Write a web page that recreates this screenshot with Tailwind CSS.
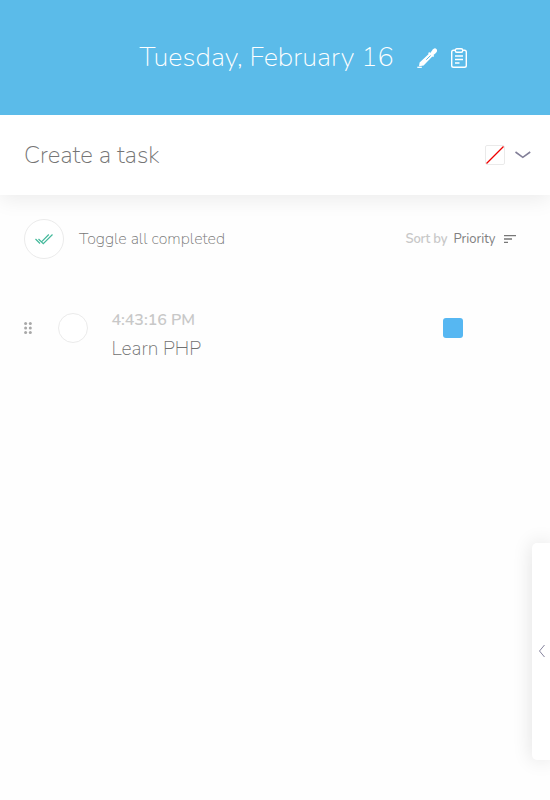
<!DOCTYPE html>
<html lang="en">
<head>
<meta charset="utf-8">
<meta name="viewport" content="width=device-width, initial-scale=1">
<title>Tasks</title>
<script src="https://cdn.jsdelivr.net/npm/@tailwindcss/browser@4"></script>
</head>
<body class="relative h-screen overflow-hidden bg-[#fefefe] font-['Nunito','Open_Sans',sans-serif] font-extralight whitespace-nowrap">
  <header class="relative z-10 flex h-[115px] items-center bg-[#5bbbe9] pl-[139.500px] text-white">
    <h1 class="w-[277.500px] text-[27.100px] leading-9 font-[240] tracking-[0.05px]">Tuesday, February 16</h1>
    <svg class="h-5 w-5" viewBox="0 0 20 20" fill="none">
      <path d="M.3 19.300h4.500" stroke="white" stroke-width="1.300"/>
      <path d="M2 18.200l.6-3.700 9.100-8.600-.6-.6 1.100-1.200 1 .800 1.900-2.300C16.100.6 18-.4 19.400.9c1.300 1.300.6 3.200-.8 4.300l-2.100 1.800.7 1-1.100 1.100-.8-.7-8.700 9z" fill="white"/>
      <path d="M9.300 11.700l4.300-4.200" stroke="#5bbbe9" stroke-width="1"/>
    </svg>
    <svg class="ml-[14px] h-5 w-4" viewBox="0 0 16 20" fill="none" stroke="white" stroke-width="1.400">
      <path d="M4 2.200H2.500Q.7 2.200.7 4v13.500q0 1.800 1.800 1.800h11q1.800 0 1.800-1.800V4q0-1.800-1.800-1.800H12"/>
      <rect x="4.300" y=".7" width="7.400" height="3.600" rx="1.500"/>
      <path d="M4 8h8M4 11.500h8M4 15h4.500" stroke-width="1.300"/>
    </svg>
  </header>

  <section class="flex h-20 items-center bg-white pl-6 shadow-[0_4px_20px_rgba(0,0,0,0.08)]">
    <div class="w-[461px] text-[24px] leading-8 text-[#757575]">Create a task</div>
    <svg class="h-5 w-5" viewBox="0 0 20 20" fill="none">
      <rect x=".5" y=".5" width="19" height="19" rx="1.500" stroke="#eaeaea"/>
      <path d="M1.500 18.500l17-17" stroke="#f00000" stroke-width="1.200"/>
    </svg>
    <svg class="ml-[10px] h-2 w-4" viewBox="0 0 16 8" fill="none" stroke="#827f98" stroke-width="1.600"><path d="M.5 1l7.300 5.300L15.200 1"/></svg>
  </section>

  <div class="mt-6 flex h-10 items-center pl-6">
    <div class="flex h-10 w-10 items-center justify-center rounded-full border border-[#ebebeb] bg-white">
      <svg class="h-[11px] w-[18px]" viewBox="0 0 18 11" fill="none" stroke="#43b99b" stroke-width="1.200"><path d="M.5 5L5 9.500M3.500 5L8.300 9.700 17.500.5M6.500 7.800L13.800.5"/></svg>
    </div>
    <div class="ml-[15px] w-[326.500px] text-[16px] text-[#777]">Toggle all completed</div>
    <div class="mt-px w-[48px] text-[13px] font-semibold tracking-[-0.2px] text-[#c8c8c8]">Sort by</div>
    <div class="mt-px w-[50.500px] text-[13px] font-normal text-[#808080]">Priority</div>
    <svg class="h-2 w-3" viewBox="0 0 12 8" stroke="#777" stroke-width="1.300"><path d="M0 .7h12M0 4h8M0 7.300h4"/></svg>
  </div>

  <div class="mt-[45px] flex items-start pl-6">
    <svg class="mt-[18px] h-3 w-2" viewBox="0 0 8 12" fill="#a8a8a8"><circle cx="1.600" cy="1.600" r="1.500"/><circle cx="6.300" cy="1.600" r="1.500"/><circle cx="1.600" cy="6" r="1.500"/><circle cx="6.300" cy="6" r="1.500"/><circle cx="1.600" cy="10.400" r="1.500"/><circle cx="6.300" cy="10.400" r="1.500"/></svg>
    <div class="mt-[9px] ml-[26px] h-[30px] w-[30px] rounded-full border border-[#ebebeb] bg-white"></div>
    <div class="ml-[23.500px] w-[331.500px]">
      <div class="mt-[4px] text-[16px] leading-6 font-semibold tracking-[-0.05px] text-[#c8c8c8]">4:43:16 PM</div>
      <div class="mt-[3px] text-[19.200px] leading-7 text-[#707070]">Learn PHP</div>
    </div>
    <div class="mt-[14px] h-5 w-5 rounded-[3px] bg-[#56b7f2]"></div>
  </div>

  <aside class="absolute top-[543px] right-0 flex h-[217px] w-[18px] items-center rounded-l-[5px] bg-white pl-[6px] shadow-[0_0_20px_rgba(0,0,0,0.12)]">
    <svg class="h-[13px] w-[7px]" viewBox="0 0 7 13" fill="none" stroke="#85829c"><path d="M6.500 0L1.500 6l5 6"/></svg>
  </aside>
</body>
</html>
